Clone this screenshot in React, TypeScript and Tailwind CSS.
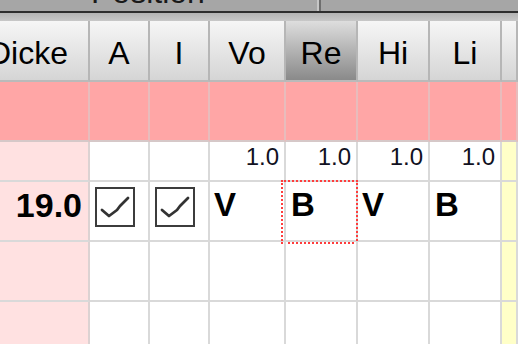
import type { ReactNode } from "react";

const cols = ["Dicke", "A", "I", "Vo", "Re", "Hi", "Li", ""];

function Check() {
  return (
    <div className="h-[40px] w-[40px] border-2 border-[#3c3c3c] bg-white">
      <svg width="36" height="36" viewBox="0 0 36 36">
        <path
          d="M5 21 L12 27 L20 21 L23 17 L25 15 L31 9"
          fill="none"
          stroke="#333333"
          strokeWidth="2.8"
          strokeLinecap="round"
          strokeLinejoin="round"
        />
      </svg>
    </div>
  );
}

function Cell({
  className = "",
  children,
}: {
  className?: string;
  children?: ReactNode;
}) {
  return (
    <div className={`relative border-b-2 border-r-2 border-[#d9d9d9] ${className}`}>
      {children}
    </div>
  );
}

export default function App() {
  return (
    <div className="h-[344px] w-[518px] overflow-hidden bg-white font-['Liberation_Sans',Arial,sans-serif] text-black">
      {/* group header strip */}
      <div className="flex h-[11px] overflow-hidden bg-[#a6a6a6]">
        <div className="w-[317px] overflow-hidden">
          <div className="-mt-[24px] pl-[91px] text-[32px] leading-none text-[#1a1a1a]">
            Position
          </div>
        </div>
        <div className="w-[2px] bg-[#c6c6c6]" />
        <div className="w-[2px] bg-[#6e6e6e]" />
        <div className="flex-1" />
      </div>
      <div className="h-[2px] bg-[#2e2e2e]" />
      <div className="h-[8px] bg-gradient-to-b from-[#b4b4b4] to-[#c8c8c8]" />

      <div className="grid grid-cols-[90px_60px_60px_76px_72px_72px_72px_1fr]">
        {/* header */}
        {cols.map((c, i) => (
          <div
            key={i}
            className={`flex h-[61px] items-center overflow-visible whitespace-nowrap border-b-2 border-r-2 border-b-[#bababa] border-r-[#b6b6b6] pt-[4px] text-[32px] leading-none ${
              i === 0 ? "justify-end pr-[20px]" : "justify-center"
            } ${
              c === "Re"
                ? "bg-gradient-to-b from-[#dedede] to-[#8a8a8a]"
                : "bg-gradient-to-b from-[#f6f6f6] to-[#d5d5d5]"
            }`}
          >
            {c}
          </div>
        ))}

        {/* pink row */}
        {cols.map((_, i) => (
          <div
            key={i}
            className="h-[60px] border-b-2 border-r-2 border-b-[#d6c8c8] border-r-[#e8bcbc] bg-[#ffa6a6]"
          />
        ))}

        {/* factor row */}
        <Cell className="h-[40px] bg-[#ffe1e1] border-r-[#dcd2d2]" />
        <Cell className="h-[40px]" />
        <Cell className="h-[40px]" />
        {["1.0", "1.0", "1.0", "1.0"].map((v, i) => (
          <Cell
            key={i}
            className="flex h-[40px] items-start justify-end pr-[5px] pt-[3px] text-[24px] leading-none text-[#111122]"
          >
            {v}
          </Cell>
        ))}
        <Cell className="h-[40px] bg-[#ffffc8]" />

        {/* data row */}
        <Cell className="flex h-[60px] items-start justify-end bg-[#ffe1e1] pr-[6px] pt-[6px] text-[34px] font-bold leading-none border-r-[#dcd2d2]">
          19.0
        </Cell>
        <Cell className="flex h-[60px] items-start pl-[5px] pt-[5px]">
          <Check />
        </Cell>
        <Cell className="flex h-[60px] items-start pl-[5px] pt-[5px]">
          <Check />
        </Cell>
        <Cell className="h-[60px] pl-[4px] pt-[6px] text-[33px] font-bold leading-none">
          V
        </Cell>
        <Cell className="h-[60px] pl-[5px] pt-[6px] text-[33px] font-bold leading-none">
          B
          <div className="absolute left-[-5px] top-[-2px] h-[64px] w-[77px] border-2 border-dotted border-[#ff3c3c]" />
        </Cell>
        <Cell className="h-[60px] pl-[4px] pt-[6px] text-[33px] font-bold leading-none">
          V
        </Cell>
        <Cell className="h-[60px] pl-[5px] pt-[6px] text-[33px] font-bold leading-none">
          B
        </Cell>
        <Cell className="h-[60px] bg-[#ffffc8]" />

        {/* empty rows */}
        {[0, 1].map((r) =>
          cols.map((_, i) => (
            <Cell
              key={`${r}-${i}`}
              className={`h-[60px] ${
                i === 0
                  ? "bg-[#ffe1e1] border-r-[#dcd2d2]"
                  : i === 7
                  ? "bg-[#ffffc8]"
                  : ""
              }`}
            />
          ))
        )}
      </div>
    </div>
  );
}
